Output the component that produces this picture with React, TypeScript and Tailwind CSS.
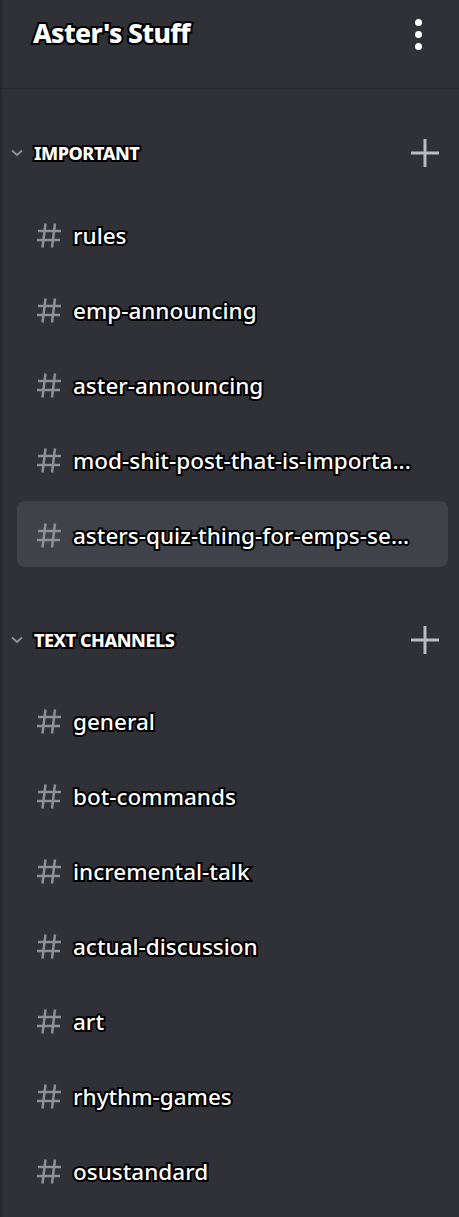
import React from 'react';

const outline = '[-webkit-text-stroke:4px_#000] [paint-order:stroke_fill]';

const important = [
  'rules',
  'emp-announcing',
  'aster-announcing',
  'mod-shit-post-that-is-importa...',
  'asters-quiz-thing-for-emps-se...',
];

const textChannels = [
  'general',
  'bot-commands',
  'incremental-talk',
  'actual-discussion',
  'art',
  'rhythm-games',
  'osustandard',
];

function Hash() {
  return (
    <svg width="26" height="27" viewBox="0 0 26 27" className="shrink-0 mt-[2px]">
      <g stroke="#8e9297" strokeWidth="2.5" strokeLinecap="butt">
        <line x1="9.5" y1="1.5" x2="6.5" y2="25.5" />
        <line x1="19" y1="1.5" x2="16" y2="25.5" />
        <line x1="2" y1="9" x2="25" y2="9" />
        <line x1="1" y1="18" x2="24" y2="18" />
      </g>
    </svg>
  );
}

function Category({ name }: { name: string }) {
  return (
    <div className="flex items-center h-[40px] pl-[9px] pr-[20px]">
      <svg width="12" height="8" viewBox="0 0 12 8" className="shrink-0">
        <path d="M1 1.5 L6 6 L11 1.5" stroke="#8e9297" strokeWidth="1.8" fill="none" />
      </svg>
      <span className={`ml-[11px] text-[18px] font-extrabold text-white tracking-tight ${outline}`}>{name}</span>
      <svg width="28" height="28" viewBox="0 0 28 28" className="ml-auto">
        <path d="M14 0 V28 M0 14 H28" stroke="#b9bbbe" strokeWidth="3" />
      </svg>
    </div>
  );
}

function Channel({ name, active }: { name: string; active?: boolean }) {
  return (
    <div
      className={`flex items-center h-[66px] ml-[15px] mr-[11px] pl-[19px] rounded-lg ${active ? 'bg-[#3f4248]' : ''}`}
    >
      <Hash />
      <span className={`ml-[11px] pt-[3px] text-[22.5px] font-medium text-white whitespace-nowrap ${outline}`}>
        {name}
      </span>
    </div>
  );
}

export default function App() {
  return (
    <div
      className="w-[459px] h-[1217px] bg-[#2f3136] border-l-2 border-[#27282c] overflow-hidden"
      style={{ fontFamily: '"Noto Sans", "Open Sans", sans-serif' }}
    >
      <div className="flex items-center h-[89px] pl-[31px] pr-[37px] pb-[20px] border-b border-[#28292d]">
        <h1 className={`text-[26.5px] font-extrabold text-white tracking-tight ${outline}`}>Aster's Stuff</h1>
        <div className="ml-auto flex flex-col gap-[5px]">
          <span className="w-[7px] h-[7px] rounded-full bg-white" />
          <span className="w-[7px] h-[7px] rounded-full bg-white" />
          <span className="w-[7px] h-[7px] rounded-full bg-white" />
        </div>
      </div>

      <div className="pt-[44px]">
        <Category name="IMPORTANT" />
        <div className="mt-[28px] flex flex-col gap-[9px]">
          {important.map((c, i) => (
            <Channel key={c} name={c} active={i === important.length - 1} />
          ))}
        </div>

        <div className="mt-[53px]">
          <Category name="TEXT CHANNELS" />
        </div>
        <div className="mt-[27px] flex flex-col gap-[9px]">
          {textChannels.map((c) => (
            <Channel key={c} name={c} />
          ))}
        </div>
      </div>
    </div>
  );
}
